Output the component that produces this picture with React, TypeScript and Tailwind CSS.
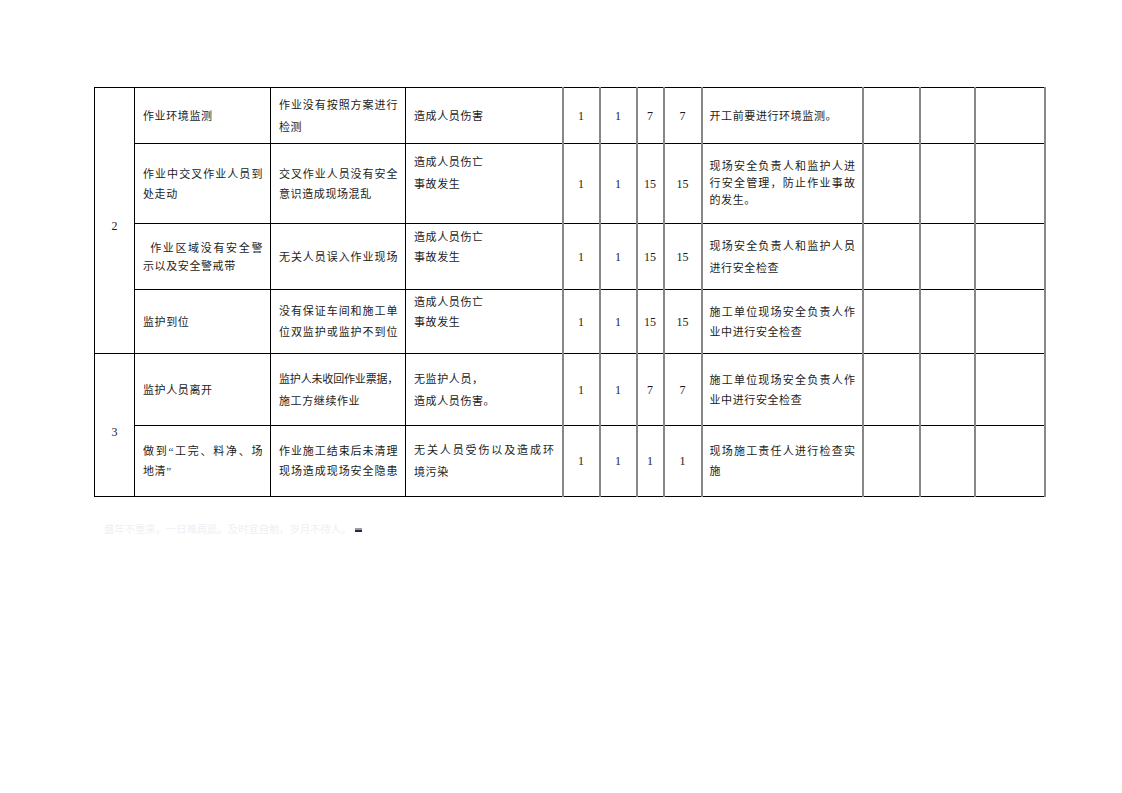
type Line = { t: string; j?: boolean; c?: string };
type TextCell = { lines: Line[]; lh: string };
type Row = {
  h: string;
  hazard: TextCell;
  cause: TextCell;
  result: TextCell;
  nums: string[];
  measure: TextCell;
};

const rows: Row[] = [
  {
    h: "h-[56px]",
    hazard: { lines: [{ t: "作业环境监测" }], lh: "leading-[22px]" },
    cause: { lines: [{ t: "作业没有按照方案进行", j: true }, { t: "检测" }], lh: "leading-[22px]" },
    result: { lines: [{ t: "造成人员伤害" }], lh: "leading-[22px]" },
    nums: ["1", "1", "7", "7"],
    measure: { lines: [{ t: "开工前要进行环境监测。" }], lh: "leading-[22px]" },
  },
  {
    h: "h-[80px]",
    hazard: { lines: [{ t: "作业中交叉作业人员到", j: true }, { t: "处走动" }], lh: "leading-[20px]" },
    cause: { lines: [{ t: "交叉作业人员没有安全", j: true }, { t: "意识造成现场混乱" }], lh: "leading-[20px]" },
    result: { lines: [{ t: "造成人员伤亡" }, { t: "事故发生" }, { t: "\u00a0" }], lh: "leading-[22px]" },
    nums: ["1", "1", "15", "15"],
    measure: {
      lines: [
        { t: "现场安全负责人和监护人进", j: true },
        { t: "行安全管理，防止作业事故", j: true },
        { t: "的发生。" },
      ],
      lh: "leading-[17px]",
    },
  },
  {
    h: "h-[66px]",
    hazard: {
      lines: [{ t: "\u2002作业区域没有安全警", j: true }, { t: "示以及安全警戒带" }],
      lh: "leading-[18px]",
    },
    cause: { lines: [{ t: "无关人员误入作业现场", j: true }], lh: "leading-[22px]" },
    result: { lines: [{ t: "造成人员伤亡" }, { t: "事故发生" }, { t: "\u00a0" }], lh: "leading-[20px]" },
    nums: ["1", "1", "15", "15"],
    measure: {
      lines: [{ t: "现场安全负责人和监护人员", j: true }, { t: "进行安全检查" }],
      lh: "leading-[22px]",
    },
  },
  {
    h: "h-[64px]",
    hazard: { lines: [{ t: "监护到位" }], lh: "leading-[22px]" },
    cause: {
      lines: [
        { t: "没有保证车间和施工单", j: true },
        { t: "位双监护或监护不到位", j: true },
      ],
      lh: "leading-[21px]",
    },
    result: { lines: [{ t: "造成人员伤亡" }, { t: "事故发生" }, { t: "\u00a0" }], lh: "leading-[20px]" },
    nums: ["1", "1", "15", "15"],
    measure: {
      lines: [{ t: "施工单位现场安全负责人作", j: true }, { t: "业中进行安全检查" }],
      lh: "leading-[20px]",
    },
  },
  {
    h: "h-[72px]",
    hazard: { lines: [{ t: "监护人员离开" }], lh: "leading-[22px]" },
    cause: {
      lines: [{ t: "监护人未收回作业票据，", j: true, c: "tracking-[-0.3px]" }, { t: "施工方继续作业" }],
      lh: "leading-[22px]",
    },
    result: { lines: [{ t: "无监护人员，" }, { t: "造成人员伤害。" }], lh: "leading-[22px]" },
    nums: ["1", "1", "7", "7"],
    measure: {
      lines: [{ t: "施工单位现场安全负责人作", j: true }, { t: "业中进行安全检查" }],
      lh: "leading-[20px]",
    },
  },
  {
    h: "h-[71px]",
    hazard: {
      lines: [{ t: "做到“工完、料净、场", j: true }, { t: "地清”" }],
      lh: "leading-[20px]",
    },
    cause: {
      lines: [
        { t: "作业施工结束后未清理", j: true },
        { t: "现场造成现场安全隐患", j: true },
      ],
      lh: "leading-[20px]",
    },
    result: {
      lines: [{ t: "无关人员受伤以及造成环", j: true }, { t: "境污染" }],
      lh: "leading-[22px]",
    },
    nums: ["1", "1", "1", "1"],
    measure: {
      lines: [{ t: "现场施工责任人进行检查实", j: true }, { t: "施" }],
      lh: "leading-[20px]",
    },
  },
];

const cjk = "font-['Liberation_Serif','Noto_Sans_CJK_SC',serif]";
const blackCell = "border-y border-y-black border-l border-l-black align-middle";
const grayCell = "border-y border-y-black border-l-2 border-l-[#888] align-middle";

function Text({ cell }: { cell: TextCell }) {
  return (
    <div className={`${cell.lh} text-[11px] tracking-[0.6px] text-[#1c1c1c] ${cjk}`}>
      {cell.lines.map((l, i) => (
        <div
          key={i}
          className={`whitespace-nowrap ${l.j ? "text-justify [text-align-last:justify]" : "text-left"} ${l.c ?? ""}`}
        >
          {l.t}
        </div>
      ))}
    </div>
  );
}

export default function App() {
  return (
    <div className="min-h-[793px] w-[1122px] bg-white pl-[94px] pt-[87px]">
      <table className="w-[950px] table-fixed border-collapse border-r-2 border-r-[#888]">
        <colgroup>
          <col className="w-[40px]" />
          <col className="w-[136px]" />
          <col className="w-[135px]" />
          <col className="w-[157px]" />
          <col className="w-[37px]" />
          <col className="w-[37px]" />
          <col className="w-[27px]" />
          <col className="w-[38px]" />
          <col className="w-[161px]" />
          <col className="w-[57px]" />
          <col className="w-[55px]" />
          <col className="w-[70px]" />
        </colgroup>
        <tbody>
          {rows.map((r, i) => (
            <tr key={i} className={r.h}>
              {i === 0 && (
                <td
                  rowSpan={4}
                  className={`${blackCell} pt-[10px] text-center text-[12px] text-[#1c1c1c] font-['Liberation_Serif',serif]`}
                >
                  2
                </td>
              )}
              {i === 4 && (
                <td
                  rowSpan={2}
                  className={`${blackCell} pt-[14px] text-center text-[12px] text-[#1c1c1c] font-['Liberation_Serif',serif]`}
                >
                  3
                </td>
              )}
              <td className={`${blackCell} pl-[8px] pr-[7px]`}>
                <Text cell={r.hazard} />
              </td>
              <td className={`${blackCell} pl-[8px] pr-[7px]`}>
                <Text cell={r.cause} />
              </td>
              <td className={`${blackCell} pl-[8px] pr-[7px]`}>
                <Text cell={r.result} />
              </td>
              {r.nums.map((n, k) => (
                <td
                  key={k}
                  className={`${grayCell} text-center text-[12px] text-[#1c1c1c] font-['Liberation_Serif',serif]`}
                >
                  {n}
                </td>
              ))}
              <td className={`${grayCell} pl-[7px] pr-[6px]`}>
                <Text cell={r.measure} />
              </td>
              <td className={grayCell} />
              <td className={grayCell} />
              <td className={grayCell} />
            </tr>
          ))}
        </tbody>
      </table>
      <div className="mt-[25px] flex items-center pl-[10px]">
        <span className={`text-[10.5px] tracking-[-0.2px] text-[#eef0f4] ${cjk}`}>
          盛年不重来，一日难再晨。及时宜自勉，岁月不待人。
        </span>
        <span className="ml-[4px] flex flex-col">
          <span className="h-[2px] w-[7px] bg-[#9a9aa8]" />
          <span className="h-[2px] w-[7px] bg-[#2a2a35]" />
        </span>
      </div>
    </div>
  );
}
